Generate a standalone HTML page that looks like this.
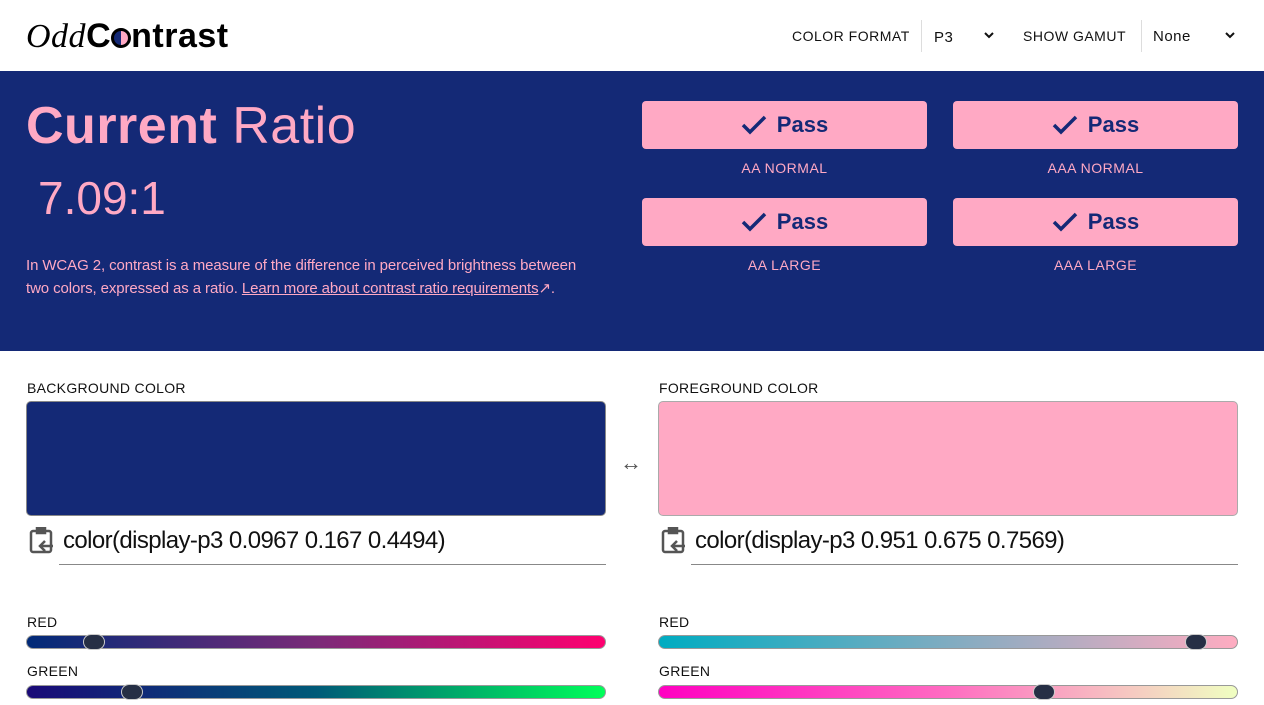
<!DOCTYPE html>
<html><head><style>
*{box-sizing:border-box;margin:0;padding:0}
body{width:1264px;height:705px;overflow:hidden;background:#fff;font-family:"Liberation Sans",sans-serif;position:relative}
.abs{position:absolute}
.hdr-t{font-size:14px;letter-spacing:.5px;color:#111}
.blue{background:#142976}
.pink{color:#ffa9c4}
.btn{position:absolute;width:285px;height:48px;background:#ffa9c4;border-radius:4px;color:#142976;font-weight:bold;font-size:22px;display:flex;align-items:center;justify-content:center;gap:10px}
.lbl{position:absolute;width:285px;text-align:center;font-size:14px;letter-spacing:.5px;color:#ffa9c4}
.sl{font-size:14px;letter-spacing:.3px;color:#111;position:absolute}
.bar{position:absolute;height:14px;border-radius:7px;border:1px solid #999;width:580px}
.th{position:absolute;width:22px;height:16px;border-radius:8px;background:#262f45;border:1px solid #ccc;top:-2px}
</style></head><body>
<div class="abs" style="left:26px;top:16px;font-size:34px;line-height:40px;letter-spacing:.5px"><span style="font-family:'Liberation Serif',serif;font-style:italic">Odd</span><b>C<span style="display:inline-block;width:20px;height:20px;border-radius:50%;background:linear-gradient(90deg,#142976 50%,#ffa9c4 50%);border:3px solid #000;vertical-align:-1px"></span>ntrast</b></div>
<div class="abs hdr-t" style="left:792px;top:28px">COLOR FORMAT</div>
<div class="abs" style="left:921px;top:20px;width:1px;height:32px;background:#ddd"></div>
<div class="abs hdr-t" style="left:934px;top:29px;font-size:15px">P3</div>
<svg class="abs" style="left:984px;top:31px" width="10" height="8" viewBox="0 0 10 8"><path d="M1 2l4 4 4-4" stroke="#111" stroke-width="2" fill="none"/></svg>
<div class="abs hdr-t" style="left:1023px;top:28px">SHOW GAMUT</div>
<div class="abs" style="left:1141px;top:20px;width:1px;height:32px;background:#ddd"></div>
<div class="abs hdr-t" style="left:1153px;top:28px;font-size:15px">None</div>
<svg class="abs" style="left:1225px;top:31px" width="10" height="8" viewBox="0 0 10 8"><path d="M1 2l4 4 4-4" stroke="#111" stroke-width="2" fill="none"/></svg>

<div class="abs blue" style="left:0;top:71px;width:1264px;height:280px"></div>
<div class="abs pink" style="left:26px;top:96px;font-size:52px;line-height:60px;letter-spacing:.5px"><b>Current</b> Ratio</div>
<div class="abs pink" style="left:38px;top:170px;font-size:46px;line-height:56px">7.09:1</div>
<div class="abs pink" style="left:26px;top:254px;width:620px;font-size:15px;line-height:23px;letter-spacing:-.1px">In WCAG 2, contrast is a measure of the difference in perceived brightness between<br>two colors, expressed as a ratio. <u>Learn more about contrast ratio requirements</u>↗.</div>
<div class="btn" style="left:642px;top:101px"><svg width="26" height="20" viewBox="0 0 26 20"><path d="M2 10l7 7L24 2" stroke="#142976" stroke-width="3.5" fill="none"/></svg>Pass</div>
<div class="btn" style="left:953px;top:101px"><svg width="26" height="20" viewBox="0 0 26 20"><path d="M2 10l7 7L24 2" stroke="#142976" stroke-width="3.5" fill="none"/></svg>Pass</div>
<div class="lbl" style="left:642px;top:160px">AA NORMAL</div>
<div class="lbl" style="left:953px;top:160px">AAA NORMAL</div>
<div class="btn" style="left:642px;top:198px"><svg width="26" height="20" viewBox="0 0 26 20"><path d="M2 10l7 7L24 2" stroke="#142976" stroke-width="3.5" fill="none"/></svg>Pass</div>
<div class="btn" style="left:953px;top:198px"><svg width="26" height="20" viewBox="0 0 26 20"><path d="M2 10l7 7L24 2" stroke="#142976" stroke-width="3.5" fill="none"/></svg>Pass</div>
<div class="lbl" style="left:642px;top:257px">AA LARGE</div>
<div class="lbl" style="left:953px;top:257px">AAA LARGE</div>

<div class="sl" style="left:27px;top:380px">BACKGROUND COLOR</div>
<div class="sl" style="left:659px;top:380px">FOREGROUND COLOR</div>
<div class="abs" style="left:26px;top:401px;width:580px;height:115px;background:#142976;border-radius:5px;border:1px solid #888"></div>
<div class="abs" style="left:658px;top:401px;width:580px;height:115px;background:#ffa9c4;border-radius:5px;border:1px solid #aaa"></div>
<div class="abs" style="left:620px;top:450px;font-size:22px;color:#555">↔</div>
<svg class="abs" style="left:28px;top:527px" width="28" height="28" viewBox="0 0 28 28" fill="none" stroke="#555" stroke-width="2.5"><rect x="3" y="4" width="20" height="21" rx="2"/><rect x="9" y="1" width="8" height="5" fill="#555"/><path d="M25 19h-12M17 14l-5 5 5 5"/></svg>
<svg class="abs" style="left:660px;top:527px" width="28" height="28" viewBox="0 0 28 28" fill="none" stroke="#555" stroke-width="2.5"><rect x="3" y="4" width="20" height="21" rx="2"/><rect x="9" y="1" width="8" height="5" fill="#555"/><path d="M25 19h-12M17 14l-5 5 5 5"/></svg>
<div class="abs" style="left:63px;top:527px;font-size:24px;color:#111;letter-spacing:-.6px">color(display-p3 0.0967 0.167 0.4494)</div>
<div class="abs" style="left:695px;top:527px;font-size:24px;color:#111;letter-spacing:-.6px">color(display-p3 0.951 0.675 0.7569)</div>
<div class="abs" style="left:59px;top:564px;width:547px;height:1px;background:#888"></div>
<div class="abs" style="left:691px;top:564px;width:547px;height:1px;background:#888"></div>

<div class="sl" style="left:27px;top:614px">RED</div>
<div class="bar" style="left:26px;top:635px;background:linear-gradient(90deg,#002a78,#7a2a78,#ff0070)"><div class="th" style="left:56px"></div></div>
<div class="sl" style="left:27px;top:663px">GREEN</div>
<div class="bar" style="left:26px;top:685px;background:linear-gradient(90deg,#1a0a78,#005a78,#00ff5a)"><div class="th" style="left:94px"></div></div>
<div class="sl" style="left:659px;top:614px">RED</div>
<div class="bar" style="left:658px;top:635px;background:linear-gradient(90deg,#00acc1,#ffacc1)"><div class="th" style="left:526px"></div></div>
<div class="sl" style="left:659px;top:663px">GREEN</div>
<div class="bar" style="left:658px;top:685px;background:linear-gradient(90deg,#ff00c1,#ff6cc1,#f0ffc1)"><div class="th" style="left:374px"></div></div>
</body></html>
